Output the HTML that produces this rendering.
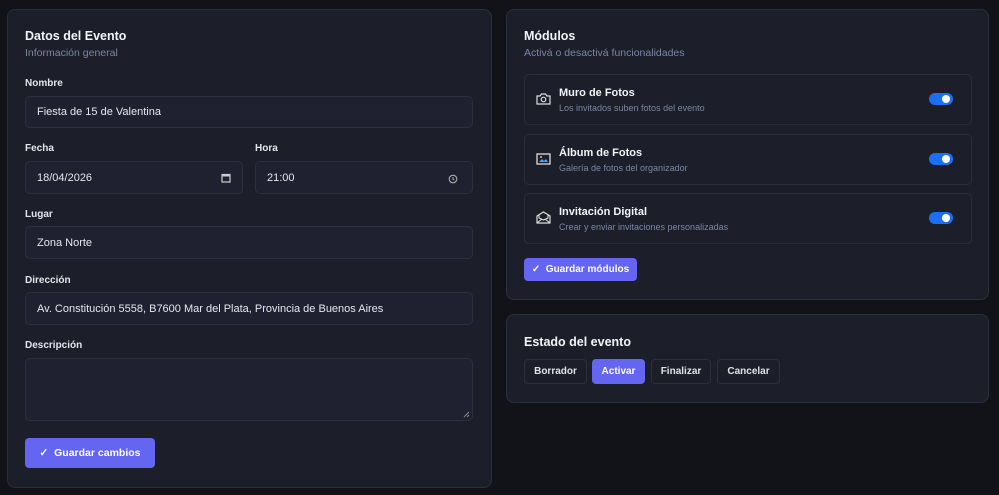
<!DOCTYPE html>
<html><head><meta charset="utf-8"><style>
*{box-sizing:border-box;margin:0;padding:0}
body{width:999px;height:495px;background:#121318;font-family:"Liberation Sans",sans-serif;color:#e8e9ef;position:relative;overflow:hidden}
.card{position:absolute;background:#1c1e29;border:1px solid #2b2e3b;border-radius:8px}
.abs{position:absolute}
h2{font-size:12.5px;font-weight:bold;color:#f3f4f8}
.sub{font-size:10.5px;color:#7d86a3}
.lbl{font-size:10px;font-weight:bold;color:#e3e5ec}
.inp{position:absolute;background:#1f2130;border:1px solid #2c2f3d;border-radius:5px;font-size:11px;color:#e6e7ee;padding-left:11px;display:flex;align-items:center}
.btn{position:absolute;background:#6466f1;border-radius:4px;color:#fff;font-size:10.5px;font-weight:bold;display:flex;align-items:center;justify-content:center}
.row{position:absolute;left:524px;width:448px;height:51px;border:1px solid #2b2e3b;border-radius:5px}
.row .t{position:absolute;left:34px;top:12px;font-size:11px;font-weight:bold;color:#f3f4f8}
.row .d{position:absolute;left:34px;top:28px;font-size:9px;color:#7d86a3}
.tg{position:absolute;left:404px;top:18px;width:24px;height:12px;border-radius:6px;background:#1d6ff2}
.tg:after{content:"";position:absolute;right:3px;top:2px;width:8px;height:8px;border-radius:50%;background:#fff}
.ic{position:absolute;left:11px;top:17px}
.sb{position:absolute;top:359px;height:25px;border:1px solid #2c2f3d;border-radius:4px;font-size:10px;font-weight:bold;color:#dfe1e8;display:flex;align-items:center;justify-content:center}
</style></head><body>
<div class="card" style="left:7px;top:9px;width:485px;height:479px"></div>
<div class="card" style="left:506px;top:9px;width:483px;height:291px"></div>
<div class="card" style="left:506px;top:314px;width:483px;height:89px"></div>

<h2 class="abs" style="left:25px;top:29px">Datos del Evento</h2>
<div class="abs sub" style="left:25px;top:47px">Información general</div>
<div class="abs lbl" style="left:25px;top:78px">Nombre</div>
<div class="inp" style="left:25px;top:96px;width:448px;height:32px">Fiesta de 15 de Valentina</div>
<div class="abs lbl" style="left:25px;top:143px">Fecha</div>
<div class="abs lbl" style="left:255px;top:143px">Hora</div>
<div class="inp" style="left:25px;top:161px;width:218px;height:33px">18/04/2026
<svg class="abs" style="right:11px;top:11px" width="10" height="10" viewBox="0 0 10 10"><rect x="1" y="1.5" width="8" height="7.5" fill="none" stroke="#ccc" stroke-width="1.2"/><rect x="1" y="1.5" width="8" height="2" fill="#ccc"/></svg></div>
<div class="inp" style="left:255px;top:161px;width:218px;height:33px">21:00
<svg class="abs" style="right:14px;top:12px" width="10" height="10" viewBox="0 0 10 10"><circle cx="5" cy="5" r="3.8" fill="none" stroke="#aaa" stroke-width="1.1"/><path d="M5 3v2.2l1.3.8" stroke="#aaa" fill="none"/></svg></div>
<div class="abs lbl" style="left:25px;top:209px">Lugar</div>
<div class="inp" style="left:25px;top:226px;width:448px;height:33px">Zona Norte</div>
<div class="abs lbl" style="left:25px;top:275px">Dirección</div>
<div class="inp" style="left:25px;top:292px;width:448px;height:33px">Av. Constitución 5558, B7600 Mar del Plata, Provincia de Buenos Aires</div>
<div class="abs lbl" style="left:25px;top:340px">Descripción</div>
<div class="inp" style="left:25px;top:358px;width:448px;height:63px"><svg class="abs" style="right:2px;bottom:2px" width="7" height="7"><path d="M1 6L6 1M4 6L6 4" stroke="#888"/></svg></div>
<div class="btn" style="left:25px;top:438px;width:130px;height:30px">✓&nbsp;&nbsp;Guardar cambios</div>

<h2 class="abs" style="left:524px;top:29px">Módulos</h2>
<div class="abs sub" style="left:524px;top:47px">Activá o desactivá funcionalidades</div>
<div class="row" style="top:74px"><svg class="ic" width="15" height="13" viewBox="0 0 15 13"><path d="M1 4h3l1.5-2h4L11 4h3v8H1z" fill="none" stroke="#ddd" stroke-width="1.2"/><circle cx="7.5" cy="7.5" r="2.3" fill="none" stroke="#ddd" stroke-width="1.2"/></svg><div class="t">Muro de Fotos</div><div class="d">Los invitados suben fotos del evento</div><div class="tg"></div></div>
<div class="row" style="top:134px"><svg class="ic" width="15" height="13" viewBox="0 0 15 13"><rect x="1" y="2" width="13" height="10" fill="none" stroke="#ddd" stroke-width="1.3"/><path d="M3 10l3-3 2 2 2-2 2 3z" fill="#5aa0f0"/><circle cx="5" cy="5" r="1" fill="#f0c060"/></svg><div class="t">Álbum de Fotos</div><div class="d">Galería de fotos del organizador</div><div class="tg"></div></div>
<div class="row" style="top:193px"><svg class="ic" width="15" height="13" viewBox="0 0 15 13"><path d="M1 5l6.5-4L14 5v7H1z" fill="none" stroke="#ddd" stroke-width="1.2"/><path d="M1 12l5-4M14 12l-5-4M3 4v3l4.5 2 4.5-2V4" fill="none" stroke="#ddd" stroke-width="1.1"/></svg><div class="t">Invitación Digital</div><div class="d">Crear y enviar invitaciones personalizadas</div><div class="tg"></div></div>
<div class="btn" style="left:524px;top:258px;width:113px;height:23px;font-size:10px">✓&nbsp;&nbsp;Guardar módulos</div>

<h2 class="abs" style="left:524px;top:335px">Estado del evento</h2>
<div class="sb" style="left:524px;width:63px">Borrador</div>
<div class="sb" style="left:592px;width:53px;background:#6466f1;border-color:#6466f1;color:#fff">Activar</div>
<div class="sb" style="left:651px;width:60px">Finalizar</div>
<div class="sb" style="left:717px;width:63px">Cancelar</div>
</body></html>
